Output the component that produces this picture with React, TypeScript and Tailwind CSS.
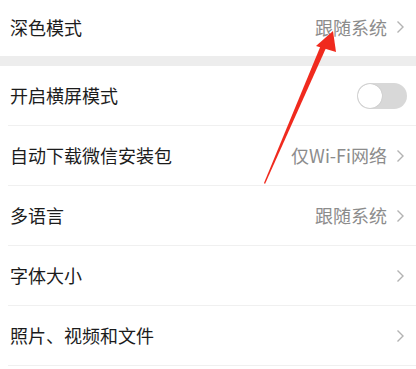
import React from "react";

const Chevron = () => (
  <svg width="9" height="14" viewBox="0 0 9 14" className="shrink-0">
    <path d="M1.5 1.5 L7 7 L1.5 12.5" fill="none" stroke="#b3b3b3" strokeWidth="1.4" />
  </svg>
);

const Row = ({ label, value, toggle, chevron = true, h = "h-[59px]" }: { label: string; value?: string; toggle?: boolean; chevron?: boolean; h?: string }) => (
  <div className={`flex items-center justify-between pl-[10px] ${toggle ? "pr-[9px]" : "pr-[11px]"} ${h} bg-white`}>
    <span className="text-[18px] text-[#1c1c1c]">{label}</span>
    <div className="flex items-center gap-[9px]">
      {value && <span className="text-[18px] text-[#8c8c8c]">{value}</span>}
      {toggle ? (
        <div className="w-[50px] h-[26px] rounded-full bg-[#d8d8d8] flex items-center pl-[1px]">
          <div className="w-[24px] h-[24px] rounded-full bg-white shadow-[0_0_1px_rgba(0,0,0,0.25)]" />
        </div>
      ) : (
        chevron && <Chevron />
      )}
    </div>
  </div>
);

const Divider = () => (
  <div className="bg-white">
    <div className="ml-[8px] h-px bg-[#f0f0f0]" />
  </div>
);

export default function App() {
  return (
    <div className="relative w-[416px] h-[369px] bg-white overflow-hidden" style={{ fontFamily: '"Noto Sans CJK SC", "Noto Sans", sans-serif' }}>
      <div className="h-[56px]">
        <Row label="深色模式" value="跟随系统" h="h-[54px]" />
      </div>
      <div className="h-[10px] bg-[#ededed]" />
      <Row label="开启横屏模式" toggle />
      <Divider />
      <Row label="自动下载微信安装包" value="仅Wi-Fi网络" />
      <Divider />
      <Row label="多语言" value="跟随系统" />
      <Divider />
      <Row label="字体大小" />
      <Divider />
      <Row label="照片、视频和文件" />
      <Divider />
      <svg className="absolute left-0 top-0 pointer-events-none" width="416" height="369" viewBox="0 0 416 369">
        <polygon points="264,183 265,184 326,48 321,45" fill="#f02a1e" />
        <polygon points="333,31 316,46 336,52" fill="#f02a1e" />
      </svg>
    </div>
  );
}
